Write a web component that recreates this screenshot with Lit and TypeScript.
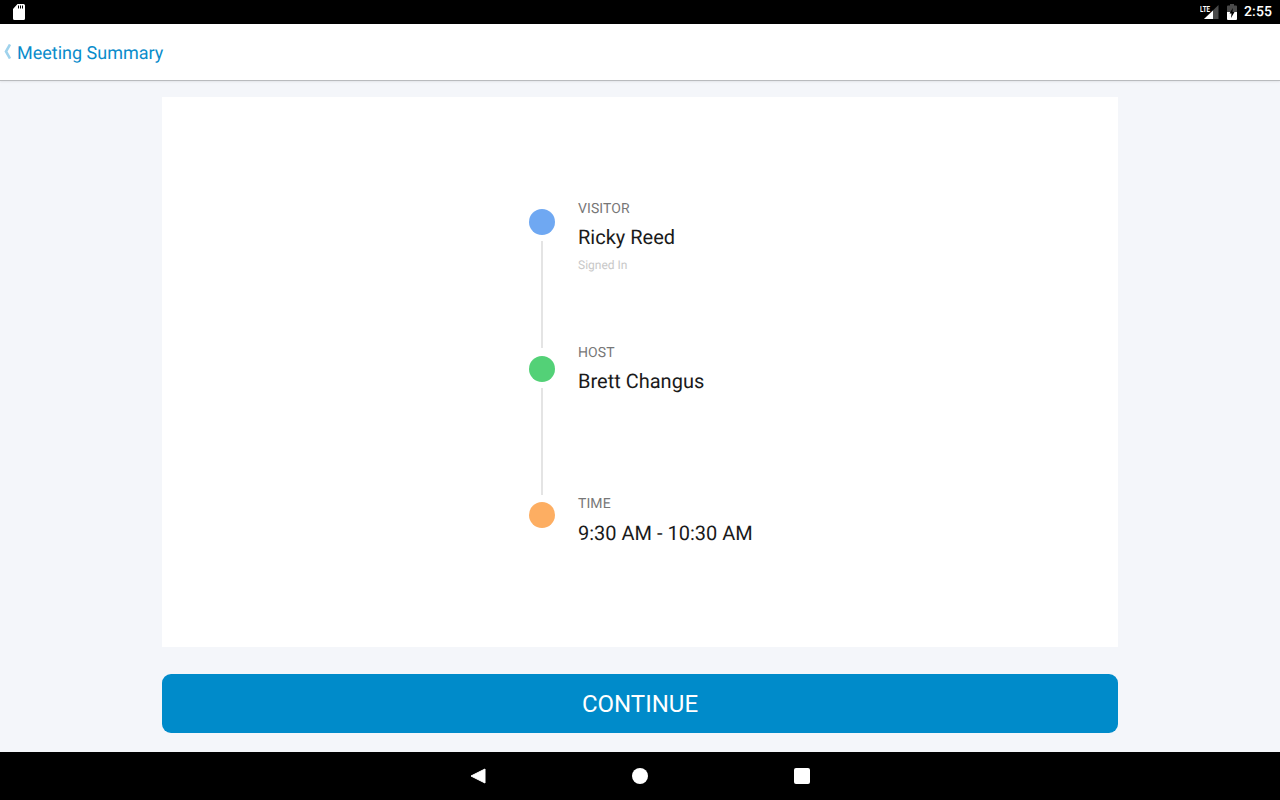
import { LitElement, html, css } from "lit";
import { customElement } from "lit/decorators.js";

@customElement("app-root")
export class AppRoot extends LitElement {
  static styles = css`
    :host { display: flex; flex-direction: column; width: 1280px; height: 800px; overflow: hidden; background: #f4f6fa; font-family: Roboto, "Liberation Sans", sans-serif; text-rendering: geometricPrecision; }
    .status { height: 24px; background: #000; display: flex; align-items: center; padding: 0 8px 0 13px; color: #fff; }
    .status .sd { display: block; }
    .status .right { margin-left: auto; display: flex; align-items: center; }
    .time { font-size: 14px; font-weight: 500; margin-left: 7px; line-height: 24px; letter-spacing: 0.1px; }
    .bat { margin-left: 8px; }
    .header { height: 57px; box-sizing: border-box; background: #fff; border-bottom: 1px solid #b9bbbe; box-shadow: 0 1px 2px rgba(0,0,0,.07); display: flex; align-items: center; padding: 0 0 0 4px; color: #0a8ccb; font-size: 18px; }
    .header svg { margin-right: 6px; margin-top: -1px; }
    .header span { padding-top: 2px; }
    .main { flex: 1; display: flex; flex-direction: column; align-items: center; padding-top: 16px; }
    .card { width: 956px; height: 550px; background: #fff; box-sizing: border-box; padding: 112px 0 0 367px; }
    .item { display: grid; grid-template-columns: 26px 1fr; column-gap: 23px; height: 147px; }
    .item.host { height: 146px; }
    .rail { display: flex; flex-direction: column; align-items: center; }
    .dot { width: 26px; height: 26px; border-radius: 50%; flex: none; }
    .blue { background: #6fa8f2; } .green { background: #53d177; } .orange { background: #fdae62; }
    .line { width: 2px; background: #e4e4e4; margin-top: 6px; height: 107px; }
    .label { font-size: 14px; line-height: 16px; color: #777; margin-top: -8px; letter-spacing: .1px; }
    .name { font-size: 20px; line-height: 24px; color: #1a1a1a; margin-top: 8px; }
    .sub { font-size: 12px; line-height: 14px; color: #c8c8c8; margin-top: 9px; }
    .host .label { margin-top: -11px; }
    .host .name { margin-top: 8px; }
    .time-item .label { margin-top: -6px; }
    .time-item .name { margin-top: 9px; }
    .btn { width: 956px; height: 59px; margin-top: 27px; border: 0; padding: 0; border-radius: 9px; background: #008bca; color: #fff; font: 400 24px/61px Roboto, "Liberation Sans", sans-serif; text-align: center; }
    .nav { height: 48px; background: #000; display: flex; align-items: center; justify-content: center; gap: 0; position: relative; }
    .nav svg { display: block; }
    .nav .slot { width: 162px; display: flex; justify-content: center; }
  `;

  render() {
    return html`
      <div class="status">
        <svg class="sd" width="12" height="16" viewBox="0 0 12 16"><path fill="#fff" fill-rule="evenodd" d="M4.5 0h6A1.5 1.5 0 0 1 12 1.5v13a1.5 1.5 0 0 1-1.5 1.5h-9A1.5 1.5 0 0 1 0 14.5V5zM5 1.5v3h1v-3zM7 1.5v3h1v-3zM9 1.5v3h1v-3z"/></svg>
        <div class="right">
          <svg width="19" height="16" viewBox="0 0 19 16"><path fill="#4a4a4a" d="M18.5 1v14H4z"/><path fill="#fff" d="M13 6.500V15H4z"/><text x="0" y="7.500" font-size="8.500" font-weight="700" fill="#fff" font-family="Roboto, sans-serif" textLength="10" lengthAdjust="spacingAndGlyphs">LTE</text></svg>
          <svg class="bat" width="10" height="16" viewBox="0 0 10 16"><path fill="#4a4a4a" d="M3 0h4v1.500h2a1 1 0 0 1 1 1V8H0V2.500a1 1 0 0 1 1-1h2z"/><path fill="#fff" d="M0 8h10v7a1 1 0 0 1-1 1H1a1 1 0 0 1-1-1z"/><path fill="#000" d="M5.800 4 2.500 9.500h2L4 14l3.500-6h-2z"/></svg>
          <span class="time">2:55</span>
        </div>
      </div>
      <div class="header">
        <svg width="7" height="15" viewBox="0 0 7 15"><path fill="none" stroke="#9fd2ec" stroke-width="2.600" d="M6 .5 2 7.500l4 7"/></svg>
        <span>Meeting Summary</span>
      </div>
      <div class="main">
        <div class="card">
          <div class="item">
            <div class="rail"><div class="dot blue"></div><div class="line"></div></div>
            <div><div class="label">VISITOR</div><div class="name">Ricky Reed</div><div class="sub">Signed In</div></div>
          </div>
          <div class="item host">
            <div class="rail"><div class="dot green"></div><div class="line"></div></div>
            <div><div class="label">HOST</div><div class="name">Brett Changus</div></div>
          </div>
          <div class="item time-item">
            <div class="rail"><div class="dot orange"></div></div>
            <div><div class="label">TIME</div><div class="name">9:30 AM - 10:30 AM</div></div>
          </div>
        </div>
        <button class="btn">CONTINUE</button>
      </div>
      <div class="nav">
        <div class="slot"><svg width="16" height="16" viewBox="0 0 16 16"><path fill="#fff" stroke="#fff" stroke-linejoin="round" d="M15 1v14L1 8z"/></svg></div>
        <div class="slot"><svg width="16" height="16" viewBox="0 0 16 16"><circle cx="8" cy="8" r="8" fill="#fff"/></svg></div>
        <div class="slot"><svg width="16" height="16" viewBox="0 0 16 16"><rect width="16" height="16" rx="2" fill="#fff"/></svg></div>
      </div>
    `;
  }
}
